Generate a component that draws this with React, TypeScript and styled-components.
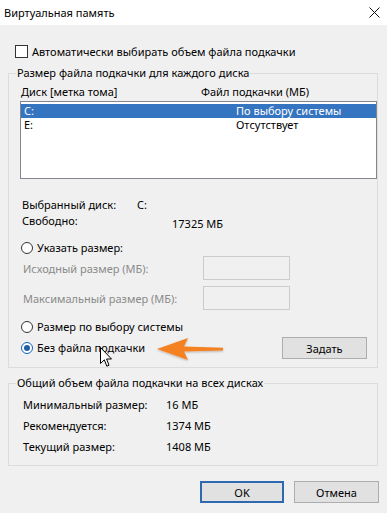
import React from 'react';
import styled, { createGlobalStyle } from 'styled-components';

const GlobalStyle = createGlobalStyle`
    html, body {
        margin: 0;
        padding: 0;
        background: #f0f0f0;
    }
    body {
        font-family: "Noto Sans", "Open Sans", sans-serif;
        font-size: 11px;
        color: #000;
    }
`

const Window = styled.div`
    position: relative;
    width: 387px;
    height: 513px;
    overflow: hidden;
    background: #f0f0f0;
`

const TitleBar = styled.div`
    height: 25px;
    background: #fff;
    display: flex;
    align-items: center;
    justify-content: space-between;
    padding: 0 7px 0 4px;
    box-sizing: border-box;
`

const Title = styled.span`
    line-height: 16px;
`

const CheckRow = styled.label`
    display: flex;
    align-items: center;
    gap: 4px;
    height: 13px;
    margin-top: 20px;
    padding-left: 15px;
`

const CheckBox = styled.span`
    width: 13px;
    height: 13px;
    box-sizing: border-box;
    border: 1px solid #333;
    background: #fff;
`

const Group = styled.fieldset<{ $top: number }>`
    margin: ${p => p.$top}px 9px 0 8px;
    padding: 0 0 8px 0;
    border: 1px solid #dcdcdc;
    min-width: 0;
`

const Legend = styled.legend`
    margin-left: 7px;
    padding: 0 1px;
    line-height: 16px;
`

const HeaderRow = styled.div`
    display: grid;
    grid-template-columns: 180px 1fr;
    margin-top: 3px;
    padding-left: 12px;
    line-height: 16px;
`

const ListBox = styled.div`
    margin: 1px 0 0 11px;
    height: 78px;
    box-sizing: border-box;
    border: 1px solid #828790;
    background: #fff;
    padding-top: 2px;
`

const ListRow = styled.div<{ $selected?: boolean }>`
    display: grid;
    grid-template-columns: 212px 1fr;
    height: 14px;
    line-height: 14px;
    padding-left: 3px;
    overflow: hidden;
    background: ${p => p.$selected ? '#3574c1' : 'transparent'};
    color: ${p => p.$selected ? '#fff' : '#000'};
`

const InfoRow = styled.div<{ $top?: number }>`
    display: flex;
    margin-top: ${p => p.$top || 0}px;
    padding-left: 13px;
    line-height: 16px;
`

const InfoLabel = styled.span<{ $width: number }>`
    width: ${p => p.$width}px;
`

const InfoValue = styled.span<{ $shift?: number }>`
    margin-top: ${p => p.$shift || 0}px;
`

const RadioRow = styled.div<{ $top: number }>`
    display: flex;
    align-items: center;
    justify-content: space-between;
    margin-top: ${p => p.$top}px;
    padding: 0 10px 0 12px;
    min-height: 16px;
`

const RadioLabel = styled.label`
    display: flex;
    align-items: center;
    gap: 4px;
    line-height: 16px;
`

const Radio = styled.span<{ $checked?: boolean }>`
    width: 12px;
    height: 12px;
    box-sizing: border-box;
    border-radius: 50%;
    border: 1px solid ${p => p.$checked ? '#0a62c4' : '#333'};
    background: #fff;
    display: flex;
    align-items: center;
    justify-content: center;
    &::after {
        content: '';
        width: 6px;
        height: 6px;
        border-radius: 50%;
        background: ${p => p.$checked ? '#1f5fa8' : 'transparent'};
    }
`

const SizeGrid = styled.div`
    display: grid;
    grid-template-columns: 180px 87px;
    grid-auto-rows: 24px;
    row-gap: 6px;
    align-items: center;
    padding-left: 14px;
    color: #8a8a8a;
`

const SizeInput = styled.div`
    height: 24px;
    box-sizing: border-box;
    border: 1px solid #cccccc;
    background: #f0f0f0;
`

const Button = styled.button<{ $primary?: boolean }>`
    width: ${p => p.$primary ? 84 : 85}px;
    height: 22px;
    box-sizing: border-box;
    padding: 0;
    font-family: inherit;
    font-size: 11px;
    color: #000;
    background: #e1e1e1;
    border: ${p => p.$primary ? '2px solid #2f69b0' : '1px solid #adadad'};
`

const TotalRow = styled.div`
    display: grid;
    grid-template-columns: 143px 1fr;
    padding-left: 14px;
    line-height: 21px;
`

const TotalRows = styled.div`
    margin-top: 3px;
`

const Footer = styled.div`
    display: flex;
    justify-content: flex-end;
    gap: 10px;
    margin-top: 15px;
    padding-right: 8px;
`

const Arrow = styled.svg`
    position: absolute;
    left: 152px;
    top: 334px;
`

const Cursor = styled.svg`
    position: absolute;
    left: 100px;
    top: 347px;
`

const CloseIcon = () => (
    <svg width="11" height="11" viewBox="0 0 11 11">
        <path d="M0.5 0.5 L10.5 10.5 M10.5 0.5 L0.5 10.5" stroke="#111" strokeWidth="1" fill="none" />
    </svg>
)

const totals = [
    ['Минимальный размер:', '16 МБ'],
    ['Рекомендуется:', '1374 МБ'],
    ['Текущий размер:', '1408 МБ'],
]

export default function App() {
    return (
        <Window>
            <GlobalStyle />
            <TitleBar>
                <Title>Виртуальная память</Title>
                <CloseIcon />
            </TitleBar>

            <CheckRow>
                <CheckBox />
                Автоматически выбирать объем файла подкачки
            </CheckRow>

            <Group $top={7}>
                <Legend>Размер файла подкачки для каждого диска</Legend>
                <HeaderRow>
                    <span>Диск [метка тома]</span>
                    <span>Файл подкачки (МБ)</span>
                </HeaderRow>
                <ListBox>
                    <ListRow $selected>
                        <span>C:</span>
                        <span>По выбору системы</span>
                    </ListRow>
                    <ListRow>
                        <span>E:</span>
                        <span>Отсутствует</span>
                    </ListRow>
                </ListBox>

                <InfoRow $top={18}>
                    <InfoLabel $width={115}>Выбранный диск:</InfoLabel>
                    <InfoValue>C:</InfoValue>
                </InfoRow>
                <InfoRow>
                    <InfoLabel $width={150}>Свободно:</InfoLabel>
                    <InfoValue $shift={3}>17325 МБ</InfoValue>
                </InfoRow>

                <RadioRow $top={8}>
                    <RadioLabel><Radio />Указать размер:</RadioLabel>
                </RadioRow>
                <SizeGrid>
                    <span>Исходный размер (МБ):</span>
                    <SizeInput />
                    <span>Максимальный размер (МБ):</span>
                    <SizeInput />
                </SizeGrid>

                <RadioRow $top={9}>
                    <RadioLabel><Radio />Размер по выбору системы</RadioLabel>
                </RadioRow>
                <RadioRow $top={2}>
                    <RadioLabel><Radio $checked />Без файла подкачки</RadioLabel>
                    <Button>Задать</Button>
                </RadioRow>
            </Group>

            <Group $top={7}>
                <Legend>Общий объем файла подкачки на всех дисках</Legend>
                <TotalRows>
                    {totals.map(([label, value]) => (
                        <TotalRow key={label}>
                            <span>{label}</span>
                            <span>{value}</span>
                        </TotalRow>
                    ))}
                </TotalRows>
            </Group>

            <Footer>
                <Button $primary>OK</Button>
                <Button>Отмена</Button>
            </Footer>

            <Arrow width="76" height="32" viewBox="0 0 76 32">
                <defs>
                    <filter id="sh" x="-10%" y="-20%" width="120%" height="160%">
                        <feDropShadow dx="0" dy="1" stdDeviation="1" floodColor="#000" floodOpacity="0.25" />
                    </filter>
                </defs>
                <path d="M5 15 L36 4 L32 12.6 L71 13.8 L71 16.4 L32 17.6 L36 26 Z" fill="#f58220" filter="url(#sh)" />
            </Arrow>

            <Cursor width="13" height="21" viewBox="0 0 13 21">
                <path d="M0.5 0.5 L0.5 16.5 L4.3 12.8 L6.8 19.2 L9 18.3 L6.6 12 L11.5 12 Z" fill="#fff" stroke="#000" strokeWidth="1" strokeLinejoin="miter" />
            </Cursor>
        </Window>
    );
}
